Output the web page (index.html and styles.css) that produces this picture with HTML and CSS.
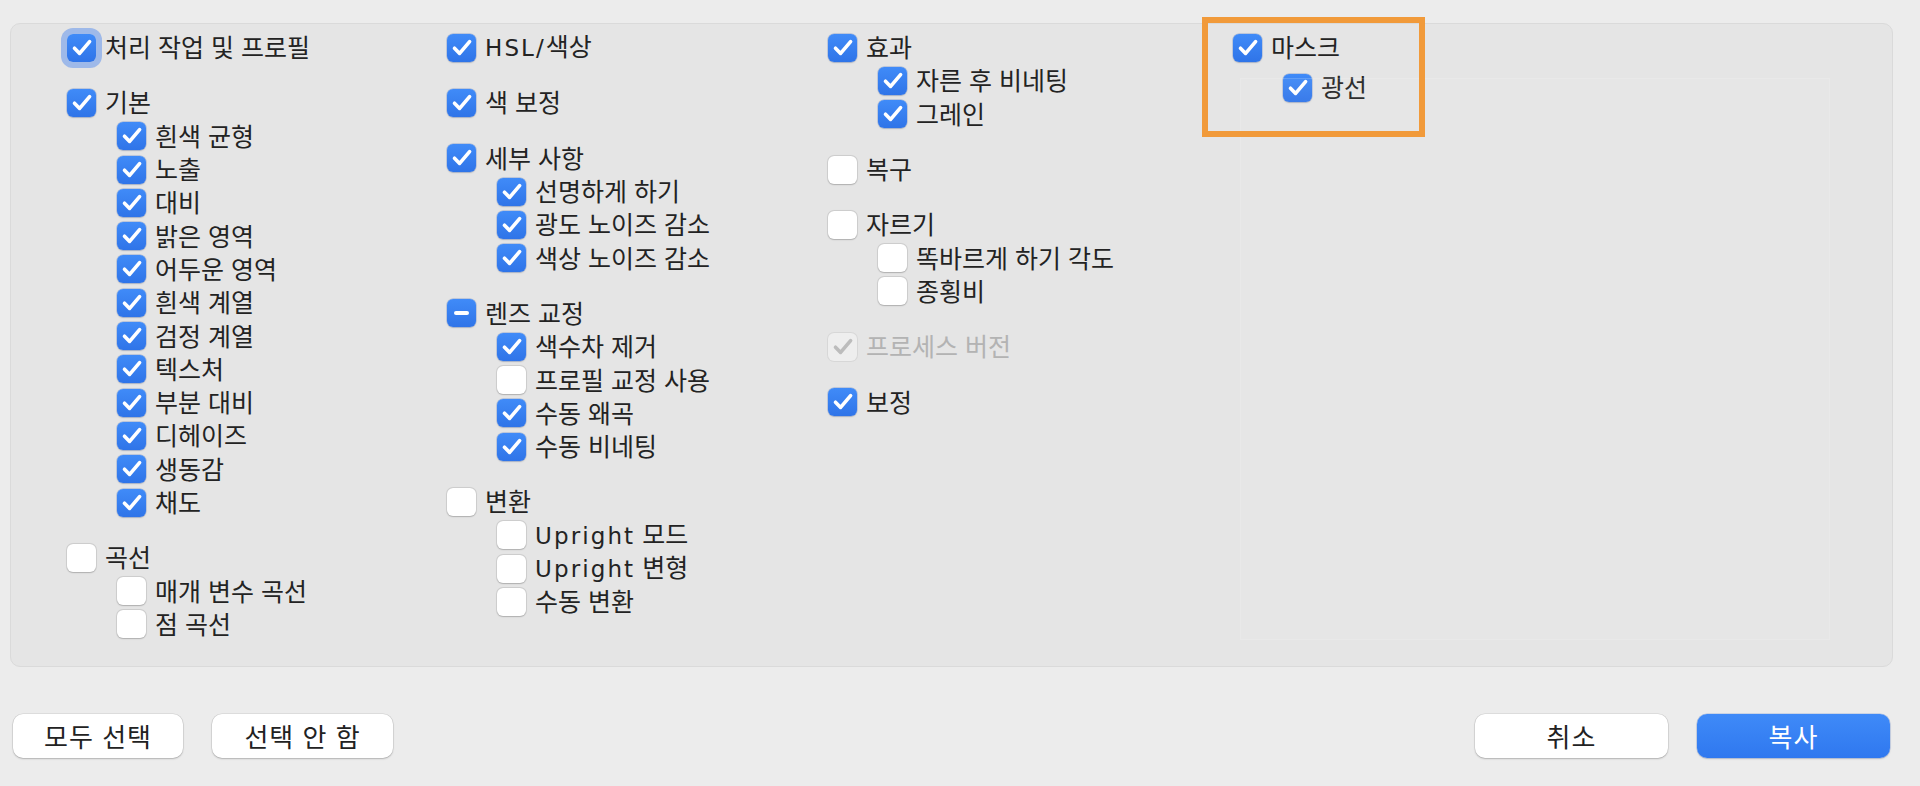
FILE: index.html
```html
<!DOCTYPE html>
<html lang="ko">
<head>
<meta charset="utf-8">
<title>설정 복사</title>
<link rel="stylesheet" href="styles.css">
</head>
<body>
<div class="page">
  <div class="panel">
    <div class="col">
      <div class="group">
        <div class="row"><span class="cb on focus"><svg viewBox="0 0 28 28"><path d="M6.5 14.2 L11.6 19.4 L21.6 7.6"/></svg></span><span class="lbl">처리 작업 및 프로필</span></div>
      </div>
      <div class="group">
        <div class="row"><span class="cb on"><svg viewBox="0 0 28 28"><path d="M6.5 14.2 L11.6 19.4 L21.6 7.6"/></svg></span><span class="lbl">기본</span></div>
        <div class="row sub"><span class="cb on"><svg viewBox="0 0 28 28"><path d="M6.5 14.2 L11.6 19.4 L21.6 7.6"/></svg></span><span class="lbl">흰색 균형</span></div>
        <div class="row sub"><span class="cb on"><svg viewBox="0 0 28 28"><path d="M6.5 14.2 L11.6 19.4 L21.6 7.6"/></svg></span><span class="lbl">노출</span></div>
        <div class="row sub"><span class="cb on"><svg viewBox="0 0 28 28"><path d="M6.5 14.2 L11.6 19.4 L21.6 7.6"/></svg></span><span class="lbl">대비</span></div>
        <div class="row sub"><span class="cb on"><svg viewBox="0 0 28 28"><path d="M6.5 14.2 L11.6 19.4 L21.6 7.6"/></svg></span><span class="lbl">밝은 영역</span></div>
        <div class="row sub"><span class="cb on"><svg viewBox="0 0 28 28"><path d="M6.5 14.2 L11.6 19.4 L21.6 7.6"/></svg></span><span class="lbl">어두운 영역</span></div>
        <div class="row sub"><span class="cb on"><svg viewBox="0 0 28 28"><path d="M6.5 14.2 L11.6 19.4 L21.6 7.6"/></svg></span><span class="lbl">흰색 계열</span></div>
        <div class="row sub"><span class="cb on"><svg viewBox="0 0 28 28"><path d="M6.5 14.2 L11.6 19.4 L21.6 7.6"/></svg></span><span class="lbl">검정 계열</span></div>
        <div class="row sub"><span class="cb on"><svg viewBox="0 0 28 28"><path d="M6.5 14.2 L11.6 19.4 L21.6 7.6"/></svg></span><span class="lbl">텍스처</span></div>
        <div class="row sub"><span class="cb on"><svg viewBox="0 0 28 28"><path d="M6.5 14.2 L11.6 19.4 L21.6 7.6"/></svg></span><span class="lbl">부분 대비</span></div>
        <div class="row sub"><span class="cb on"><svg viewBox="0 0 28 28"><path d="M6.5 14.2 L11.6 19.4 L21.6 7.6"/></svg></span><span class="lbl">디헤이즈</span></div>
        <div class="row sub"><span class="cb on"><svg viewBox="0 0 28 28"><path d="M6.5 14.2 L11.6 19.4 L21.6 7.6"/></svg></span><span class="lbl">생동감</span></div>
        <div class="row sub"><span class="cb on"><svg viewBox="0 0 28 28"><path d="M6.5 14.2 L11.6 19.4 L21.6 7.6"/></svg></span><span class="lbl">채도</span></div>
      </div>
      <div class="group">
        <div class="row"><span class="cb"></span><span class="lbl">곡선</span></div>
        <div class="row sub"><span class="cb"></span><span class="lbl">매개 변수 곡선</span></div>
        <div class="row sub"><span class="cb"></span><span class="lbl">점 곡선</span></div>
      </div>
    </div>

    <div class="col">
      <div class="group">
        <div class="row"><span class="cb on"><svg viewBox="0 0 28 28"><path d="M6.5 14.2 L11.6 19.4 L21.6 7.6"/></svg></span><span class="lbl"><span class="lat">HSL/</span>색상</span></div>
      </div>
      <div class="group">
        <div class="row"><span class="cb on"><svg viewBox="0 0 28 28"><path d="M6.5 14.2 L11.6 19.4 L21.6 7.6"/></svg></span><span class="lbl">색 보정</span></div>
      </div>
      <div class="group">
        <div class="row"><span class="cb on"><svg viewBox="0 0 28 28"><path d="M6.5 14.2 L11.6 19.4 L21.6 7.6"/></svg></span><span class="lbl">세부 사항</span></div>
        <div class="row sub"><span class="cb on"><svg viewBox="0 0 28 28"><path d="M6.5 14.2 L11.6 19.4 L21.6 7.6"/></svg></span><span class="lbl">선명하게 하기</span></div>
        <div class="row sub"><span class="cb on"><svg viewBox="0 0 28 28"><path d="M6.5 14.2 L11.6 19.4 L21.6 7.6"/></svg></span><span class="lbl">광도 노이즈 감소</span></div>
        <div class="row sub"><span class="cb on"><svg viewBox="0 0 28 28"><path d="M6.5 14.2 L11.6 19.4 L21.6 7.6"/></svg></span><span class="lbl">색상 노이즈 감소</span></div>
      </div>
      <div class="group">
        <div class="row"><span class="cb on mixed"><i class="bar"></i></span><span class="lbl">렌즈 교정</span></div>
        <div class="row sub"><span class="cb on"><svg viewBox="0 0 28 28"><path d="M6.5 14.2 L11.6 19.4 L21.6 7.6"/></svg></span><span class="lbl">색수차 제거</span></div>
        <div class="row sub"><span class="cb"></span><span class="lbl">프로필 교정 사용</span></div>
        <div class="row sub"><span class="cb on"><svg viewBox="0 0 28 28"><path d="M6.5 14.2 L11.6 19.4 L21.6 7.6"/></svg></span><span class="lbl">수동 왜곡</span></div>
        <div class="row sub"><span class="cb on"><svg viewBox="0 0 28 28"><path d="M6.5 14.2 L11.6 19.4 L21.6 7.6"/></svg></span><span class="lbl">수동 비네팅</span></div>
      </div>
      <div class="group">
        <div class="row"><span class="cb"></span><span class="lbl">변환</span></div>
        <div class="row sub"><span class="cb"></span><span class="lbl"><span class="lat">Upright</span> 모드</span></div>
        <div class="row sub"><span class="cb"></span><span class="lbl"><span class="lat">Upright</span> 변형</span></div>
        <div class="row sub"><span class="cb"></span><span class="lbl">수동 변환</span></div>
      </div>
    </div>

    <div class="col">
      <div class="group">
        <div class="row"><span class="cb on"><svg viewBox="0 0 28 28"><path d="M6.5 14.2 L11.6 19.4 L21.6 7.6"/></svg></span><span class="lbl">효과</span></div>
        <div class="row sub"><span class="cb on"><svg viewBox="0 0 28 28"><path d="M6.5 14.2 L11.6 19.4 L21.6 7.6"/></svg></span><span class="lbl">자른 후 비네팅</span></div>
        <div class="row sub"><span class="cb on"><svg viewBox="0 0 28 28"><path d="M6.5 14.2 L11.6 19.4 L21.6 7.6"/></svg></span><span class="lbl">그레인</span></div>
      </div>
      <div class="group">
        <div class="row"><span class="cb"></span><span class="lbl">복구</span></div>
      </div>
      <div class="group">
        <div class="row"><span class="cb"></span><span class="lbl">자르기</span></div>
        <div class="row sub"><span class="cb"></span><span class="lbl">똑바르게 하기 각도</span></div>
        <div class="row sub"><span class="cb"></span><span class="lbl">종횡비</span></div>
      </div>
      <div class="group">
        <div class="row disabled"><span class="cb dis"><svg viewBox="0 0 28 28"><path d="M6.5 14.2 L11.6 19.4 L21.6 7.6"/></svg></span><span class="lbl">프로세스 버전</span></div>
      </div>
      <div class="group">
        <div class="row"><span class="cb on"><svg viewBox="0 0 28 28"><path d="M6.5 14.2 L11.6 19.4 L21.6 7.6"/></svg></span><span class="lbl">보정</span></div>
      </div>
    </div>

    <div class="col col4">
      <div class="group">
        <div class="row"><span class="cb on"><svg viewBox="0 0 28 28"><path d="M6.5 14.2 L11.6 19.4 L21.6 7.6"/></svg></span><span class="lbl">마스크</span></div>
        <div class="row sub low"><span class="cb on"><svg viewBox="0 0 28 28"><path d="M6.5 14.2 L11.6 19.4 L21.6 7.6"/></svg></span><span class="lbl">광선</span></div>
      </div>
    </div>
    <div class="ghost"></div>
  </div>

  <div class="footer">
    <div class="btns">
      <button class="btn w1">모두 선택</button>
      <button class="btn w2">선택 안 함</button>
    </div>
    <div class="btns">
      <button class="btn w3">취소</button>
      <button class="btn w3 primary">복사</button>
    </div>
  </div>

  <div class="annot"></div>
</div>
</body>
</html>
```

FILE: styles.css
```css
* { box-sizing: border-box; }

html, body {
  margin: 0;
  padding: 0;
  background: #ececec;
}

body {
  width: 1920px;
  height: 786px;
  overflow: hidden;
  font-family: "Noto Sans CJK KR", "Noto Sans", sans-serif;
  color: #232323;
}

.page {
  position: relative;
  padding: 23px 27px 0 10px;
}

.panel {
  position: relative;
  height: 644px;
  background: #e5e5e5;
  border: 1px solid #dadada;
  border-radius: 10px;
  padding: 7px 0 0 56px;
  display: grid;
  grid-template-columns: 380px 381px 405px 1fr;
  align-items: start;
}

.group + .group {
  margin-top: 22px;
}

.row {
  height: 33.3px;
  display: flex;
  align-items: center;
  font-size: 25px;
  line-height: 1;
  white-space: nowrap;
}

.row.sub {
  padding-left: 50px;
}

.row.low {
  margin-top: 7px;
}

.lbl {
  margin-left: 9px;
  position: relative;
  top: -1px;
}

.lat {
  font-family: "DejaVu Sans", sans-serif;
  letter-spacing: 2.1px;
  font-size: 23px;
}

.cb {
  flex: none;
  width: 29px;
  height: 28px;
  border-radius: 6px;
  background: #ffffff;
  box-shadow: 0 0 0 1px rgba(0, 0, 0, 0.07), 0 0.5px 1.5px rgba(0, 0, 0, 0.18);
  display: flex;
  align-items: center;
  justify-content: center;
}

.cb svg {
  width: 28px;
  height: 28px;
  display: block;
}

.cb svg path {
  fill: none;
  stroke: #ffffff;
  stroke-width: 3.6;
  stroke-linecap: round;
  stroke-linejoin: round;
}

.cb.on {
  background: linear-gradient(#408bf8, #2f74e8);
  box-shadow: 0 0 0 0.5px rgba(30, 90, 200, 0.35), 0 0.5px 1.5px rgba(0, 0, 0, 0.15);
}

.cb.focus {
  box-shadow: 0 0 0 6px rgba(70, 130, 238, 0.45);
}

.cb .bar {
  display: block;
  width: 15px;
  height: 4px;
  border-radius: 2px;
  background: #ffffff;
}

.cb.dis {
  background: #eeeeee;
  box-shadow: 0 0 0 1px rgba(0, 0, 0, 0.06);
}

.cb.dis svg path {
  stroke: #bcbcbc;
}

.row.disabled .lbl {
  color: #b3b3b3;
}

.ghost {
  position: absolute;
  left: 1229px;
  top: 54px;
  width: 590px;
  height: 562px;
  border: 1px solid rgba(255, 255, 255, 0.14);
  background: rgba(255, 255, 255, 0.05);
  pointer-events: none;
}

.footer {
  margin-top: 47px;
  padding: 0 3px;
  display: flex;
  justify-content: space-between;
}

.btns {
  display: flex;
  gap: 29px;
}

.btn {
  height: 44px;
  border: none;
  border-radius: 10px;
  background: #ffffff;
  box-shadow: 0 0 0 0.5px rgba(0, 0, 0, 0.12), 0 1px 2px rgba(0, 0, 0, 0.2);
  font-family: "Noto Sans CJK KR", "Noto Sans", sans-serif;
  font-size: 26px;
  letter-spacing: 1px;
  color: #222222;
  padding: 0;
  line-height: 1;
}

.w1 { width: 170px; }
.w2 { width: 181px; }
.w3 { width: 193px; }

.btn.primary {
  background: linear-gradient(#3f8af8, #2f78ef);
  color: #ffffff;
  box-shadow: 0 0 0 0.5px rgba(20, 80, 200, 0.3), 0 1px 2px rgba(0, 0, 0, 0.15);
}

.annot {
  position: absolute;
  left: 1202px;
  top: 17px;
  width: 223px;
  height: 120px;
  border: 6px solid #f19a3a;
  pointer-events: none;
}
```
